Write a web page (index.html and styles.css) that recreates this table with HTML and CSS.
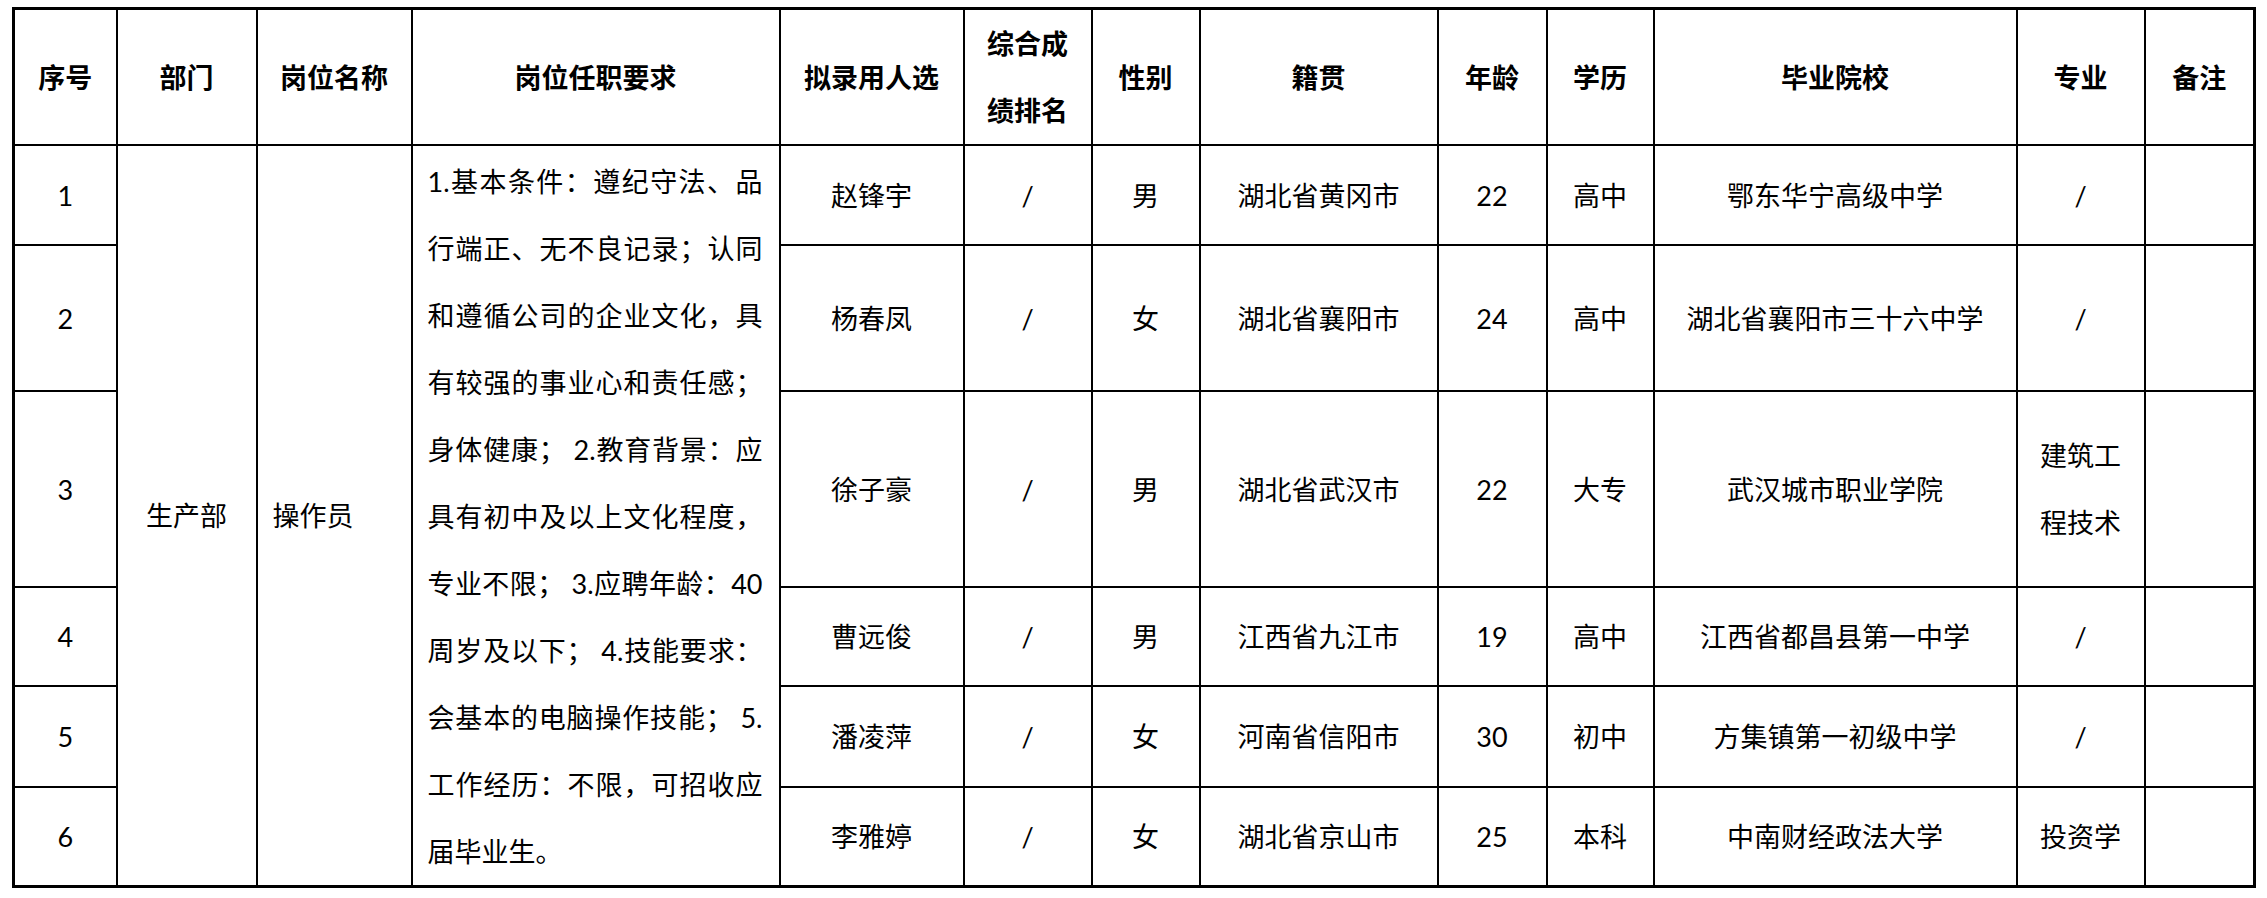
FILE: index.html
```html
<!DOCTYPE html>
<html lang="zh-CN">
<head>
<meta charset="utf-8">
<title>拟录用人员名单</title>
<link rel="stylesheet" href="styles.css">
</head>
<body>
<table class="sheet">
  <colgroup>
    <col class="c-no"><col class="c-dept"><col class="c-pos"><col class="c-req"><col class="c-name"><col class="c-rank"><col class="c-sex"><col class="c-home"><col class="c-age"><col class="c-edu"><col class="c-school"><col class="c-major"><col class="c-note">
  </colgroup>
  <thead>
    <tr class="r-head">
      <th>序号</th>
      <th>部门</th>
      <th>岗位名称</th>
      <th>岗位任职要求</th>
      <th>拟录用人选</th>
      <th>综合成<br>绩排名</th>
      <th>性别</th>
      <th>籍贯</th>
      <th>年龄</th>
      <th>学历</th>
      <th>毕业院校</th>
      <th>专业</th>
      <th>备注</th>
    </tr>
  </thead>
  <tbody>
    <tr class="r1">
      <td class="num">1</td>
      <td rowspan="6">生产部</td>
      <td rowspan="6" class="left">操作员</td>
      <td rowspan="6" class="req">
        <span class="ln">1.基本条件：遵纪守法、品</span>
        <span class="ln">行端正、无不良记录；认同</span>
        <span class="ln">和遵循公司的企业文化，具</span>
        <span class="ln">有较强的事业心和责任感；</span>
        <span class="ln">身体健康； 2.教育背景：应</span>
        <span class="ln">具有初中及以上文化程度，</span>
        <span class="ln">专业不限； 3.应聘年龄：40</span>
        <span class="ln">周岁及以下； 4.技能要求：</span>
        <span class="ln">会基本的电脑操作技能； 5.</span>
        <span class="ln">工作经历：不限，可招收应</span>
        <span class="ln last">届毕业生。</span>
      </td>
      <td>赵锋宇</td>
      <td class="num">/</td>
      <td>男</td>
      <td>湖北省黄冈市</td>
      <td class="num">22</td>
      <td>高中</td>
      <td>鄂东华宁高级中学</td>
      <td class="num">/</td>
      <td></td>
    </tr>
    <tr class="r2">
      <td class="num">2</td>
      <td>杨春凤</td>
      <td class="num">/</td>
      <td>女</td>
      <td>湖北省襄阳市</td>
      <td class="num">24</td>
      <td>高中</td>
      <td>湖北省襄阳市三十六中学</td>
      <td class="num">/</td>
      <td></td>
    </tr>
    <tr class="r3">
      <td class="num">3</td>
      <td>徐子豪</td>
      <td class="num">/</td>
      <td>男</td>
      <td>湖北省武汉市</td>
      <td class="num">22</td>
      <td>大专</td>
      <td>武汉城市职业学院</td>
      <td>建筑工<br>程技术</td>
      <td></td>
    </tr>
    <tr class="r4">
      <td class="num">4</td>
      <td>曹远俊</td>
      <td class="num">/</td>
      <td>男</td>
      <td>江西省九江市</td>
      <td class="num">19</td>
      <td>高中</td>
      <td>江西省都昌县第一中学</td>
      <td class="num">/</td>
      <td></td>
    </tr>
    <tr class="r5">
      <td class="num">5</td>
      <td>潘凌萍</td>
      <td class="num">/</td>
      <td>女</td>
      <td>河南省信阳市</td>
      <td class="num">30</td>
      <td>初中</td>
      <td>方集镇第一初级中学</td>
      <td class="num">/</td>
      <td></td>
    </tr>
    <tr class="r6">
      <td class="num">6</td>
      <td>李雅婷</td>
      <td class="num">/</td>
      <td>女</td>
      <td>湖北省京山市</td>
      <td class="num">25</td>
      <td>本科</td>
      <td>中南财经政法大学</td>
      <td>投资学</td>
      <td></td>
    </tr>
  </tbody>
</table>
</body>
</html>
```

FILE: styles.css
```css
html, body {
  margin: 0;
  padding: 0;
  background: #ffffff;
}

body {
  padding: 7px 0 0 12px;
  font-family: Lato, "Noto Sans CJK SC", sans-serif;
  color: #000000;
}

.sheet {
  border-collapse: collapse;
  table-layout: fixed;
  width: 2241px;
  border: 3px solid #000;
  font-size: 27px;
  line-height: 67px;
}

.sheet th,
.sheet td {
  border: 2px solid #000;
  padding: 0;
  text-align: center;
  vertical-align: middle;
  overflow: hidden;
}

.sheet th {
  font-weight: 700;
}

.sheet td {
  font-weight: 400;
}

.c-no { width: 103px; }
.c-dept { width: 140px; }
.c-pos { width: 155px; }
.c-req { width: 368px; }
.c-name { width: 184px; }
.c-rank { width: 128px; }
.c-sex { width: 108px; }
.c-home { width: 238px; }
.c-age { width: 109px; }
.c-edu { width: 107px; }
.c-school { width: 363px; }
.c-major { width: 128px; }
.c-note { width: 110px; }

.r-head { height: 136px; }
.r1 { height: 100px; }
.r2 { height: 146px; }
.r3 { height: 196px; }
.r4 { height: 99px; }
.r5 { height: 101px; }
.r6 { height: 99px; }

.sheet td.left {
  text-align: left;
  padding-left: 15px;
}

.sheet td.req {
  vertical-align: top;
  text-align: left;
  padding: 2px 16px 0 15px;
}

.ln {
  display: block;
  text-align: justify;
  text-align-last: justify;
  white-space: nowrap;
}

.ln.last {
  text-align-last: left;
}
```
